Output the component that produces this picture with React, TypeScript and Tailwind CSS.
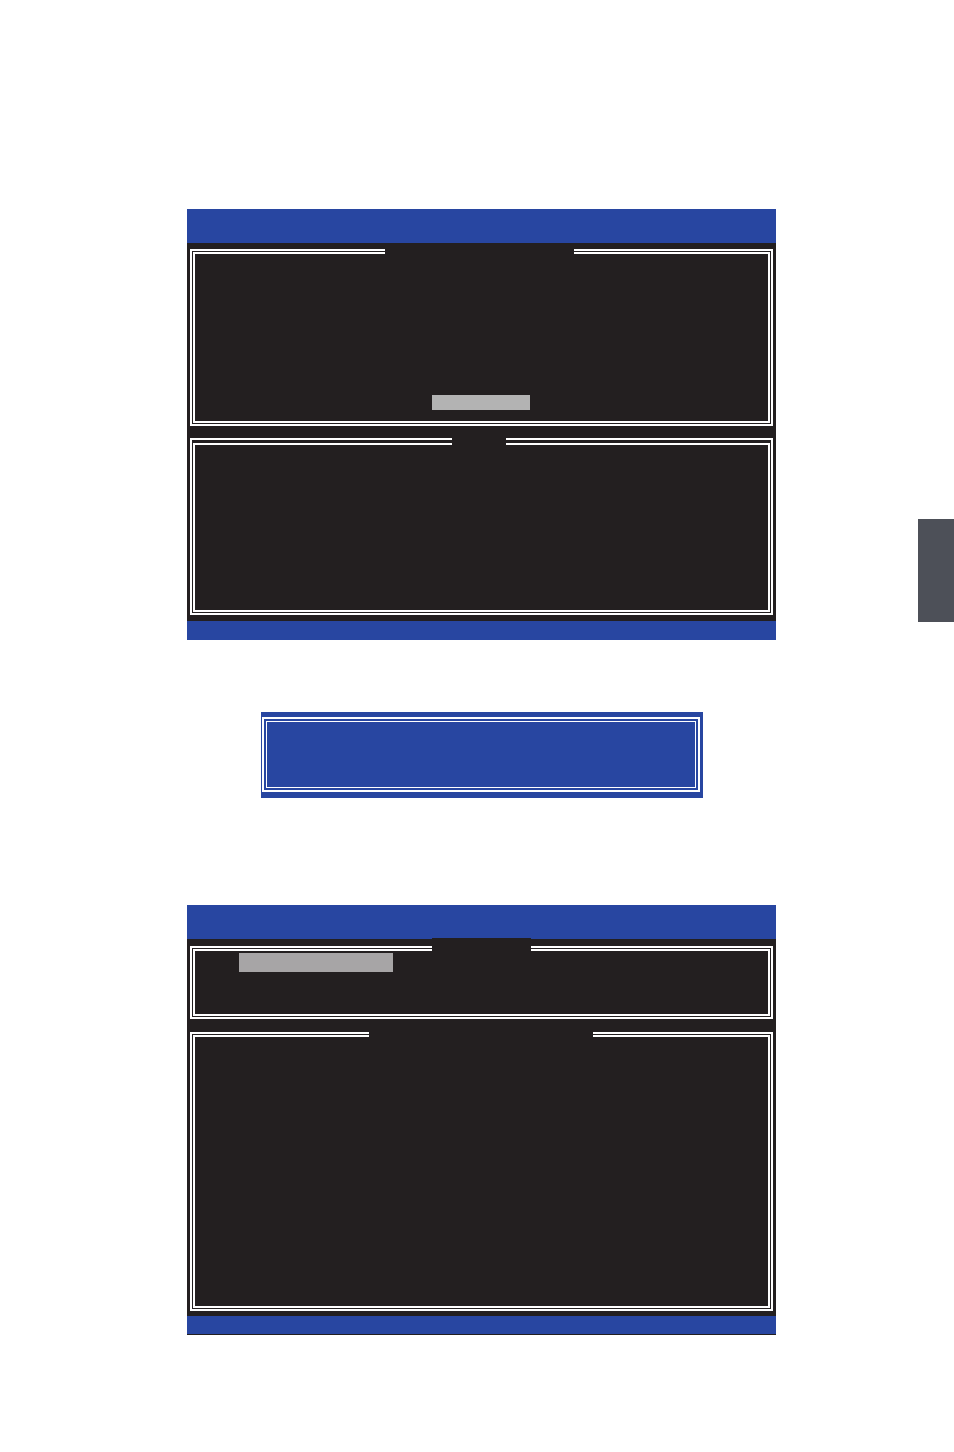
import React from "react";

const BLUE = "bg-[#2846a1]";

type FrameProps = {
  size: string;
  gap: string;
  legend: string;
  children?: React.ReactNode;
};

// Double-ruled box in the style of a text-mode setup screen; the legend
// block breaks the top rule where a section title sits.
function Frame({ size, gap, legend, children }: FrameProps) {
  return (
    <div className={`relative border-2 border-white ${gap} ${size}`}>
      <div className="h-full border-2 border-white">{children}</div>
      <span className={`absolute bg-[#231f20] ${legend}`} />
    </div>
  );
}

function Header() {
  return <div className={`h-[34px] ${BLUE}`} />;
}

function SetupScreenTop() {
  return (
    <section className="flex w-[589px] flex-col">
      <Header />
      <div className="flex flex-col gap-[12px] bg-[#231f20] px-[3px] pt-[6px] pb-[6px]">
        <Frame size="h-[177px]" gap="p-px" legend="left-[193px] top-[-2px] h-[6px] w-[189px]">
          <div className="ml-[237px] mt-[141px] h-[15px] w-[98px] bg-[#b3b3b3]" />
        </Frame>
        <Frame size="h-[177px]" gap="px-px pt-[3px] pb-px" legend="left-[260px] top-[-2px] h-[7px] w-[54px]" />
      </div>
      <div className={`h-[19px] ${BLUE}`} />
    </section>
  );
}

function SetupScreenBottom() {
  return (
    <section className="flex w-[589px] flex-col">
      <Header />
      <div className="flex flex-col gap-[13px] bg-[#231f20] px-[3px] pt-[7px] pb-[5px]">
        <Frame size="h-[73px]" gap="p-px" legend="left-[240px] top-[-10px] h-[13px] w-[99px]">
          <div className="ml-[44px] mt-[2px] h-[19px] w-[154px] bg-[#a7a5a6]" />
        </Frame>
        <Frame size="h-[279px]" gap="p-px" legend="left-[177px] top-[-2px] h-[6px] w-[224px]" />
      </div>
      <div className={`h-[19px] border-b border-[#231f20] ${BLUE}`} />
    </section>
  );
}

function MessageBox() {
  return (
    <div className={`ml-[74px] h-[86px] w-[442px] pl-[1px] pt-[5px] pr-[3px] pb-[6px] ${BLUE}`}>
      <div className="h-full border-2 border-white p-[2px]">
        <div className="h-full border border-white" />
      </div>
    </div>
  );
}

export default function App() {
  return (
    <div className="flex h-[1452px] w-[954px] bg-white">
      <main className="ml-[187px] flex flex-col pt-[209px]">
        <SetupScreenTop />
        <div className="mt-[72px]">
          <MessageBox />
        </div>
        <div className="mt-[107px]">
          <SetupScreenBottom />
        </div>
      </main>
      <aside className="ml-auto mt-[519px] h-[103px] w-[36px] self-start bg-[#4d5058]" />
    </div>
  );
}
